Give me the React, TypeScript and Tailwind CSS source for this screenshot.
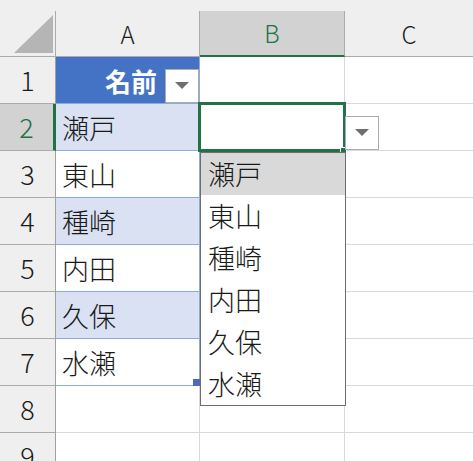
import React from "react";

const names = ["瀬戸", "東山", "種崎", "内田", "久保", "水瀬"];
const rows = [1, 2, 3, 4, 5, 6, 7, 8, 9];

function Arrow({ className }: { className: string }) {
  return (
    <div
      className={`flex items-center justify-center bg-white border border-[#ababab] ${className}`}
    >
      <svg width="14" height="8" viewBox="0 0 14 8">
        <polygon points="0,0 14,0 7,7" fill="#6f6f6f" />
      </svg>
    </div>
  );
}

function cellA(row: number) {
  if (row === 1) return "bg-[#4472c4] border-[#8ea9db]";
  if (row > 7) return "bg-white border-[#d9d9d9]";
  if (row % 2 === 0) return "bg-[#d9e1f2] border-[#8ea9db]";
  return "bg-white border-[#8ea9db]";
}

export default function App() {
  return (
    <div className="relative w-[473px] h-[461px] overflow-hidden bg-white font-['Noto_Sans_CJK_JP',sans-serif] font-light text-[#1a1a1a]">
      {/* ribbon edge */}
      <div className="h-[11px] bg-[#efefef]" />

      {/* column headers */}
      <div className="grid grid-cols-[56px_144px_145px_1fr] h-[46px]">
        <div className="relative bg-[#efefef] border-r border-b border-[#ababab]">
          <svg className="absolute left-[14px] top-[4px]" width="40" height="40" viewBox="0 0 40 40">
            <polygon points="39,0 39,38 0,38" fill="#b5b5b5" />
          </svg>
        </div>
        <div className="flex items-center justify-center bg-[#efefef] border-r border-b border-[#ababab] text-[24px]">
          A
        </div>
        <div className="flex items-center justify-center bg-[#d2d2d2] border-r border-[#ababab] border-b-2 border-b-[#217346] text-[24px] text-[#217346]">
          B
        </div>
        <div className="flex items-center justify-center bg-[#efefef] border-b border-[#ababab] text-[24px]">
          C
        </div>
      </div>

      {/* rows */}
      {rows.map((row) => (
        <div key={row} className="grid grid-cols-[56px_144px_145px_1fr] h-[47px]">
          <div
            className={`flex items-center justify-center border-b border-[#ababab] text-[27px] ${
              row === 2
                ? "bg-[#d2d2d2] text-[#217346] border-r-[3px] border-r-[#217346]"
                : "bg-[#efefef] border-r border-r-[#9f9f9f]"
            }`}
          >
            {row}
          </div>
          <div className={`flex items-center border-r border-b ${cellA(row)}`}>
            {row === 1 ? (
              <div className="flex w-full h-full items-center justify-end">
                <span className="font-bold text-white text-[26px] mr-[8px]">名前</span>
                <Arrow className="w-[34px] h-[34px] mt-[11px]" />
              </div>
            ) : row <= 7 ? (
              <span className="pl-[6px] text-[27px] leading-none">{names[row - 2]}</span>
            ) : null}
          </div>
          <div className="border-r border-b border-[#d9d9d9]" />
          <div className="border-b border-[#d9d9d9]" />
        </div>
      ))}

      {/* table resize handle */}
      <div className="absolute left-[193px] top-[379px] w-[7px] h-[7px] bg-[#4e6ac0]" />

      {/* selected cell B2 */}
      <div className="absolute left-[198px] top-[102px] w-[148px] h-[50px] border-[3px] border-[#217346]" />
      <div className="absolute left-[340px] top-[147px] w-[7px] h-[7px] bg-[#217346] border border-white" />

      {/* B2 dropdown button */}
      <Arrow className="absolute left-[345px] top-[116px] w-[34px] h-[34px]" />

      {/* dropdown list */}
      <div className="absolute left-[200px] top-[152px] w-[146px] bg-white border border-[#6e6e6e]">
        {names.map((n, i) => (
          <div
            key={n}
            className={`flex items-center h-[42px] pl-[7px] text-[27px] ${
              i === 0 ? "bg-[#d9d9d9]" : ""
            }`}
          >
            {n}
          </div>
        ))}
      </div>
    </div>
  );
}
